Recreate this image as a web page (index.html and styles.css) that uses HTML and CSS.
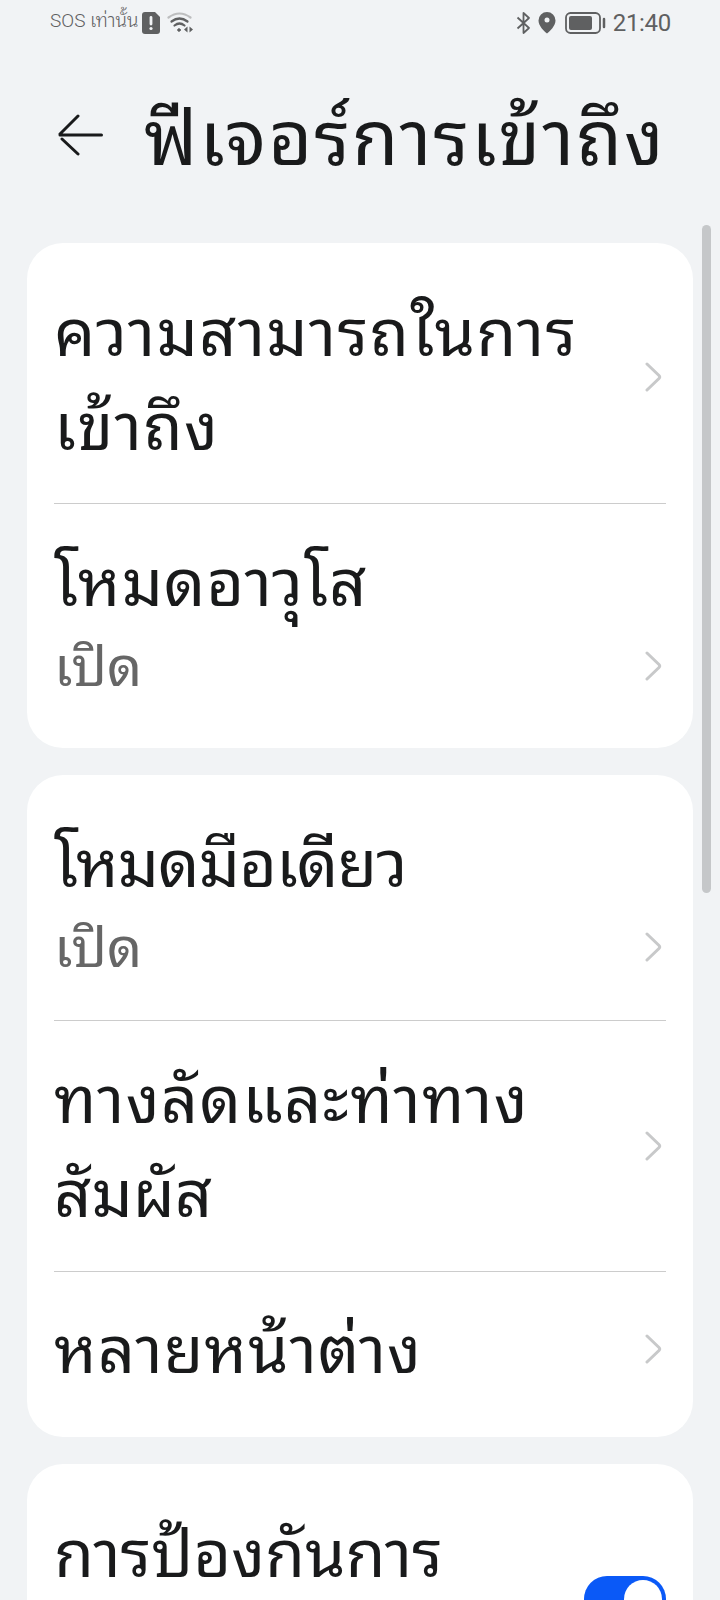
FILE: index.html
```html
<!DOCTYPE html>
<html lang="th">
<head>
  <meta charset="UTF-8">
  <meta name="viewport" content="width=device-width, initial-scale=1.0">
  <title>ฟีเจอร์การเข้าถึง</title>
  <link rel="stylesheet" href="styles.css">
</head>
<body>

  <div class="status-bar">
    <div class="status-left">
      <span class="carrier">SOS เท่านั้น</span>
      <svg class="sim" width="18" height="22" viewBox="0 0 18 22">
        <path d="M3 0H13L18 5V19Q18 22 15 22H3Q0 22 0 19V3Q0 0 3 0Z" fill="#5f6061"/>
        <path d="M9 5.500V12" stroke="#f1f3f5" stroke-width="2.800" stroke-linecap="round"/>
        <circle cx="9" cy="16.500" r="1.600" fill="#f1f3f5"/>
      </svg>
      <svg class="wifi" width="28" height="22" viewBox="0 0 28 22" fill="none" stroke="#5f6061" stroke-width="2.200" stroke-linecap="round">
        <path d="M1.500 5.500Q12.500 -2.500 23.500 5.500" stroke="#bdbebf"/>
        <path d="M4.500 9.500Q12.500 3.500 20.500 9.500"/>
        <path d="M7.500 13.500Q12.500 9.500 17.500 13.500"/>
        <circle cx="12" cy="18" r="1.300" fill="#5f6061" stroke-width="1"/>
        <path d="M20.500 14.500V20.500L17 17.500ZM22.500 14.500V20.500L26 17.500Z" fill="#5f6061" stroke="none"/>
      </svg>
    </div>
    <div class="status-right">
      <svg class="bluetooth" width="16" height="24" viewBox="0 0 16 24" fill="none" stroke="#5f6061" stroke-width="1.800" stroke-linejoin="round">
        <path d="M1.500 6.500L13 17L7.500 22V2L13 7L1.500 17.500"/>
      </svg>
      <svg class="pin" width="18" height="22" viewBox="0 0 18 22">
        <path d="M9 0A8.500 8.500 0 0 0 .5 8.500C.5 14 6 19 9 21.500C12 19 17.500 14 17.500 8.500A8.500 8.500 0 0 0 9 0Z" fill="#5f6061"/>
        <circle cx="9" cy="8" r="2.500" fill="#f1f3f5"/>
      </svg>
      <svg class="battery" width="42" height="22" viewBox="0 0 42 22">
        <rect x="1" y="1" width="34" height="20" rx="4.500" fill="none" stroke="#5f6061" stroke-width="1.800"/>
        <rect x="4" y="4" width="23" height="14" rx="2" fill="#5f6061"/>
        <path d="M39 7V15" stroke="#5f6061" stroke-width="2.500" stroke-linecap="round"/>
      </svg>
      <span class="clock">21:40</span>
    </div>
  </div>

  <header class="header">
    <svg class="back" width="46" height="42" viewBox="0 0 46 42" fill="none" stroke="#191a1b" stroke-width="3" stroke-linecap="round">
      <path d="M43.500 21H2M20 2L2 20M4 25L20 40"/>
    </svg>
    <h1>ฟีเจอร์การเข้าถึง</h1>
  </header>

  <main class="list">
    <section class="card card-first">
      <div class="item item-two">
        <div class="label label-wide">ความสามารถในการ<br>เข้าถึง</div>
        <svg class="chevron" width="18" height="30" viewBox="0 0 18 30"><path d="M2 2L14 13.500Q15.500 15 14 16.500L2 28"/></svg>
      </div>
      <div class="item item-sub">
        <div class="text">
          <div class="label label-mid">โหมดอาวุโส</div>
          <div class="value">เปิด</div>
        </div>
        <svg class="chevron" width="18" height="30" viewBox="0 0 18 30"><path d="M2 2L14 13.500Q15.500 15 14 16.500L2 28"/></svg>
      </div>
    </section>

    <section class="card card-second">
      <div class="item item-sub item-top">
        <div class="text">
          <div class="label label-tight">โหมดมือเดียว</div>
          <div class="value">เปิด</div>
        </div>
        <svg class="chevron" width="18" height="30" viewBox="0 0 18 30"><path d="M2 2L14 13.500Q15.500 15 14 16.500L2 28"/></svg>
      </div>
      <div class="item item-mid">
        <div class="label"><span class="label-wide">ทางลัดและท่าทาง</span><br>สัมผัส</div>
        <svg class="chevron" width="18" height="30" viewBox="0 0 18 30"><path d="M2 2L14 13.500Q15.500 15 14 16.500L2 28"/></svg>
      </div>
      <div class="item item-one">
        <div class="label label-mid">หลายหน้าต่าง</div>
        <svg class="chevron" width="18" height="30" viewBox="0 0 18 30"><path d="M2 2L14 13.500Q15.500 15 14 16.500L2 28"/></svg>
      </div>
    </section>

    <section class="card card-third">
      <div class="item item-switch">
        <div class="label">การป้องกันการ</div>
        <div class="switch"><div class="knob"></div></div>
      </div>
    </section>
  </main>

  <div class="scrollbar"></div>

</body>
</html>
```

FILE: styles.css
```css
* {
  box-sizing: border-box;
}

body {
  margin: 0;
  height: 1600px;
  overflow: hidden;
  position: relative;
  display: flex;
  flex-direction: column;
  background-color: #f1f3f5;
  color: #191a1b;
  font-family: "Noto Sans Thai Looped", "Noto Sans", sans-serif;
}

.status-bar {
  display: flex;
  justify-content: space-between;
  height: 45px;
  padding: 0 49px 0 50px;
  color: #5f6061;
}

.status-left,
.status-right {
  display: flex;
  align-items: center;
}

.carrier {
  width: 92px;
  padding-bottom: 3px;
  font-size: 19px;
  line-height: 40px;
  white-space: nowrap;
  font-family: Roboto, "Noto Sans Thai Looped", "Noto Sans", sans-serif;
  font-weight: 300;
}

.wifi {
  margin-left: 7px;
}

.bluetooth {
  margin-right: -1px;
}

.pin {
  margin-left: 7px;
}

.battery {
  margin-left: 9px;
}

.clock {
  margin-left: 6px;
  font-family: Roboto, sans-serif;
  font-size: 24px;
  letter-spacing: -0.3px;
}

.header {
  display: flex;
  align-items: center;
  height: 198px;
  padding: 0 0 18px 58px;
}

h1 {
  margin: -8px 0 0 40px;
  font-size: 76px;
  font-weight: 400;
  line-height: 94px;
  letter-spacing: 1.8px;
  white-space: nowrap;
}

.list {
  flex: 1;
  min-height: 0;
  padding: 0 27px;
}

.card {
  padding: 0 27px;
  margin-bottom: 27px;
  border-radius: 36px;
  background-color: #fff;
}

.card-first {
  height: 505px;
}

.card-second {
  height: 662px;
}

.card-third {
  height: 136px;
  margin-bottom: 0;
  border-radius: 36px 36px 0 0;
}

.item {
  display: flex;
  align-items: center;
  justify-content: space-between;
  padding-right: 3px;
}

.item + .item {
  border-top: 1px solid #ccc;
}

.item-two {
  height: 260px;
  padding-top: 7px;
}

.item-sub {
  height: 245px;
  align-items: flex-start;
  padding-top: 26px;
}

.item-top {
  padding-top: 36px;
}

.item-sub .chevron {
  margin-top: 121px;
}

.item-mid {
  height: 251px;
}

.item-one {
  height: 165px;
  padding-bottom: 10px;
}

.item-switch {
  align-items: flex-start;
  padding: 37px 0 0;
}

.label {
  margin-top: -5px;
  font-size: 65px;
  line-height: 94px;
  white-space: nowrap;
}

.label-wide {
  letter-spacing: 1.3px;
}

.label-mid {
  letter-spacing: 0.9px;
}

.label-tight {
  letter-spacing: -1px;
}

.item-mid .label,
.item-one .label {
  margin-top: -10px;
}

.item-sub .label,
.item-switch .label {
  margin-top: 0;
}

.value {
  padding-top: 2px;
  font-size: 55px;
  line-height: 70px;
  color: #666;
}

.chevron {
  fill: none;
  stroke: #c8c9ca;
  stroke-width: 3;
  stroke-linecap: round;
}

.switch {
  width: 82px;
  height: 46px;
  margin-top: 75px;
  padding: 4px;
  border-radius: 23px;
  background-color: #0a59f7;
}

.knob {
  width: 38px;
  height: 38px;
  margin-left: auto;
  border-radius: 50%;
  background-color: #fff;
}

/* lies over the page edge */
.scrollbar {
  position: absolute;
  top: 225px;
  right: 9px;
  width: 9px;
  height: 668px;
  border-radius: 5px;
  background-color: #c5c7c9;
}
```
